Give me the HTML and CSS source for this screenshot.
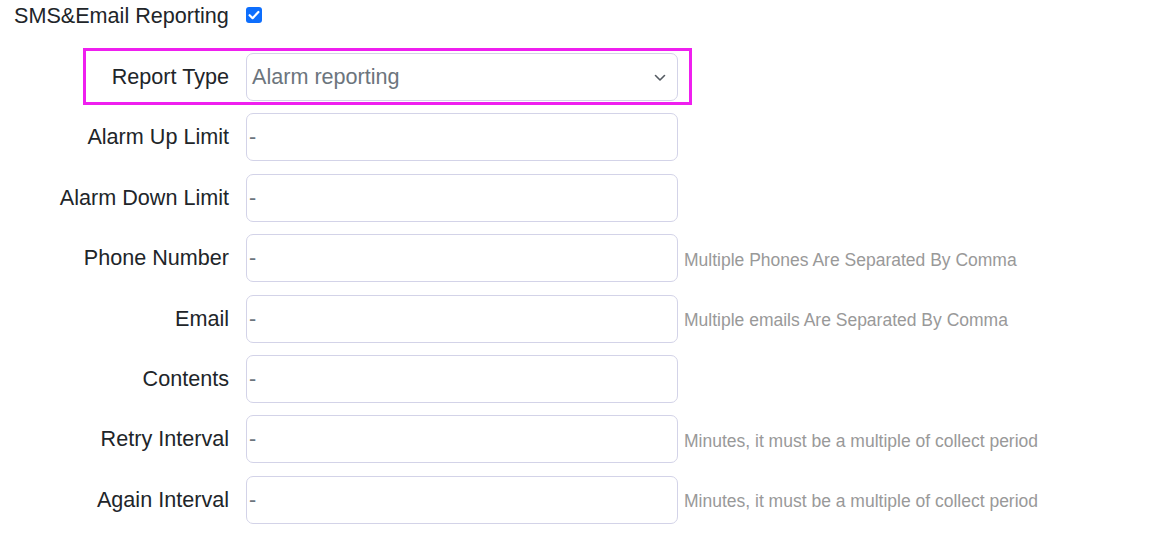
FILE: index.html
```html
<!DOCTYPE html>
<html>
<head>
<meta charset="utf-8">
<link rel="stylesheet" href="styles.css">
</head>
<body>
<div class="page">
  <div class="top-row">
    <span class="top-label">SMS&amp;Email Reporting</span>
    <span class="check">
      <svg viewBox="0 0 16 16" width="16" height="16"><rect x="0" y="0" width="16" height="16" rx="3" fill="#0d6efd"/><path d="M3.6 8.2 L6.6 11.2 L12.4 5" fill="none" stroke="#fff" stroke-width="2.2" stroke-linecap="round" stroke-linejoin="round"/></svg>
    </span>
  </div>
  <div class="form">
    <div class="row highlight">
      <label class="lbl">Report Type</label>
      <div class="field select">
        <span class="val">Alarm reporting</span>
        <svg class="chev" viewBox="0 0 12 8" width="12" height="8"><path d="M1.5 1.5 L6 6 L10.5 1.5" fill="none" stroke="#555b62" stroke-width="1.6" stroke-linecap="round" stroke-linejoin="round"/></svg>
      </div>
    </div>
    <div class="row">
      <label class="lbl">Alarm Up Limit</label>
      <div class="field"><span class="dash">-</span></div>
    </div>
    <div class="row">
      <label class="lbl">Alarm Down Limit</label>
      <div class="field"><span class="dash">-</span></div>
    </div>
    <div class="row">
      <label class="lbl">Phone Number</label>
      <div class="field"><span class="dash">-</span></div>
      <span class="help">Multiple Phones Are Separated By Comma</span>
    </div>
    <div class="row">
      <label class="lbl">Email</label>
      <div class="field"><span class="dash">-</span></div>
      <span class="help">Multiple emails Are Separated By Comma</span>
    </div>
    <div class="row">
      <label class="lbl">Contents</label>
      <div class="field"><span class="dash">-</span></div>
    </div>
    <div class="row">
      <label class="lbl">Retry Interval</label>
      <div class="field"><span class="dash">-</span></div>
      <span class="help">Minutes, it must be a multiple of collect period</span>
    </div>
    <div class="row">
      <label class="lbl">Again Interval</label>
      <div class="field"><span class="dash">-</span></div>
      <span class="help">Minutes, it must be a multiple of collect period</span>
    </div>
  </div>
</div>
</body>
</html>
```

FILE: styles.css
```css
html, body {
  margin: 0;
  padding: 0;
  background: #fff;
}
body {
  font-family: "Liberation Sans", Arial, sans-serif;
  color: #212529;
}
.top-row {
  display: flex;
  align-items: center;
  height: 32px;
  padding-left: 14px;
}
.top-label {
  font-size: 21.6px;
  width: 232px;
  line-height: 32px;
}
.check {
  display: flex;
  width: 16px;
  height: 16px;
  margin-top: -2px;
}
.form {
  display: flex;
  flex-direction: column;
  gap: 12.4px;
  margin-top: 21px;
}
.row {
  position: relative;
  display: flex;
  align-items: center;
  height: 48px;
}
.highlight::before {
  content: "";
  position: absolute;
  left: 83px;
  top: -5px;
  width: 609px;
  height: 57px;
  box-sizing: border-box;
  border: 3px solid #ef1fef;
}
.lbl {
  width: 229px;
  text-align: right;
  font-size: 21.6px;
  color: #212529;
  flex: none;
}
.field {
  margin-left: 17px;
  width: 432px;
  height: 48px;
  box-sizing: border-box;
  border: 1px solid #d3d3e8;
  border-radius: 7px;
  background: #fff;
  display: flex;
  align-items: center;
  padding-left: 5px;
  font-size: 21.6px;
  flex: none;
}
.select {
  justify-content: space-between;
  padding-right: 11px;
}
.val {
  color: #6c757d;
}
.dash {
  color: #6c757d;
  margin-left: -3px;
}
.chev {
  display: block;
  margin-top: 1px;
}
.help {
  margin-left: 6px;
  font-size: 17.5px;
  color: #999;
  margin-top: 4px;
}
```
